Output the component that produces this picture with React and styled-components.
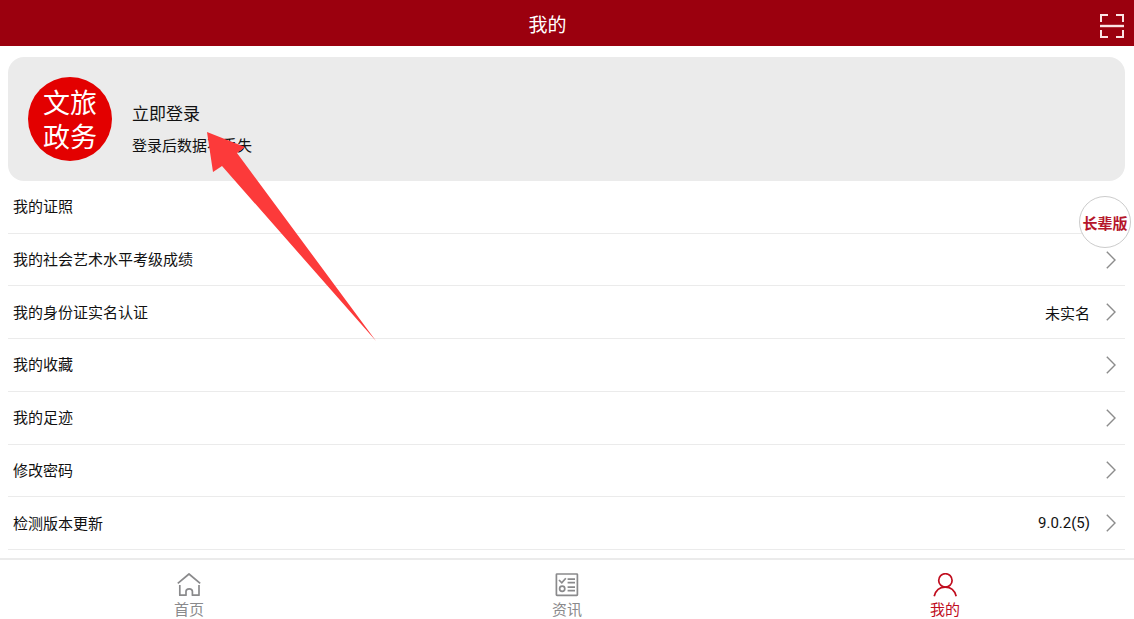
import React from 'react'
import styled, { createGlobalStyle } from 'styled-components';

const rows = [
    { label: '我的证照' },
    { label: '我的社会艺术水平考级成绩' },
    { label: '我的身份证实名认证', value: '未实名' },
    { label: '我的收藏' },
    { label: '我的足迹' },
    { label: '修改密码' },
    { label: '检测版本更新', value: '9.0.2(5)' },
]

function ScanIcon() {
    return (
        <svg width="24" height="24" viewBox="0 0 24 24" fill="none" stroke="currentColor" strokeWidth="2">
            <path d="M1 8V1H8M16 1H23V8M23 16V23H16M8 23H1V16" />
            <path d="M0 12H24" strokeWidth="2.4" />
        </svg>
    )
}

function ChevronIcon() {
    return (
        <svg width="10" height="18" viewBox="0 0 10 18" fill="none" stroke="#8c8c8c" strokeWidth="1.4">
            <path d="M0.8 0.8L9 9L0.8 17.2" />
        </svg>
    )
}

function HomeIcon() {
    return (
        <svg width="24" height="24" viewBox="0 0 24 24" fill="none" stroke="currentColor" strokeWidth="1.7" strokeLinejoin="round">
            <path d="M0.8 10.4L12 1L23.2 10.4" />
            <path d="M2.8 12V22.2H9V18.6C9 16.8 10.2 15.8 12.2 15.8S15.4 16.8 15.4 18.6V22.2H22V12" />
        </svg>
    )
}

function NewsIcon() {
    return (
        <svg width="24" height="24" viewBox="0 0 24 24" fill="none" stroke="currentColor" strokeWidth="1.7">
            <rect x="1.4" y="1" width="21" height="21.4" rx="0.6" />
            <path d="M4 7L6.8 9.8L10.8 5.2" />
            <circle cx="7.2" cy="15.8" r="2.6" />
            <path d="M12.6 6.2H20M12.6 9.6H20M12.6 14.2H20M12.6 17.6H20" />
        </svg>
    )
}

function UserIcon() {
    return (
        <svg width="24" height="24" viewBox="0 0 24 24" fill="none" stroke="currentColor" strokeWidth="1.7">
            <circle cx="12.4" cy="7.4" r="6.7" />
            <path d="M1.2 23.2C2.6 17.8 6.6 14.1 12.2 14.1S21.8 17.8 23.2 23.2" />
        </svg>
    )
}

function App() {
    return (
        <Page>
            <GlobalStyle />
            <Header>
                <Title>我的</Title>
                <ScanButton aria-label="扫一扫"><ScanIcon /></ScanButton>
            </Header>
            <Main>
                <LoginCard>
                    <Logo>
                        <span>文旅</span>
                        <span>政务</span>
                    </Logo>
                    <LoginText>
                        <LoginTitle>立即登录</LoginTitle>
                        <LoginHint>登录后数据不丢失</LoginHint>
                    </LoginText>
                </LoginCard>
                <Menu>
                    {rows.map((row) => (
                        <MenuItem key={row.label}>
                            <MenuButton>
                                <Label>{row.label}</Label>
                                {row.value && <span>{row.value}</span>}
                                <ChevronIcon />
                            </MenuButton>
                        </MenuItem>
                    ))}
                </Menu>
            </Main>
            <TabBar>
                <Tab href="#home"><HomeIcon />首页</Tab>
                <Tab href="#news"><NewsIcon />资讯</Tab>
                <Tab href="#mine" $active aria-current="page"><UserIcon />我的</Tab>
            </TabBar>
            <ElderButton>长辈版</ElderButton>
            <Pointer width="170" height="210" viewBox="0 0 170 210" aria-hidden="true">
                <path d="M0 0L38 15L30 21L169 209L15 34L6 40Z" fill="#fc3a3a" />
            </Pointer>
        </Page>
    )
}

export default App;

const GlobalStyle = createGlobalStyle`
* {
    box-sizing: border-box;
}
body {
    margin: 0;
    background: #fff;
    color: #111;
    font-family: Roboto, "Noto Sans CJK SC", sans-serif;
    font-size: 15px;
}
button {
    padding: 0;
    border: none;
    background: none;
    color: inherit;
    font: inherit;
    cursor: pointer;
}
svg {
    display: block;
    flex-shrink: 0;
}
`
const Page = styled.div`
position: relative;
display: flex;
flex-direction: column;
min-height: 100vh;
`
const Header = styled.header`
display: flex;
align-items: center;
height: 46px;
padding: 5px 10px 0 0;
background: #9b000e;
color: #fff;
`
const Title = styled.h1`
flex: 1;
margin: 0;
font-size: 19px;
line-height: 28px;
font-weight: 400;
text-align: center;
`
const ScanButton = styled.button`
padding-left: 5px;
color: #fbe4e4;
`
const Main = styled.main`
display: flex;
flex: 1;
flex-direction: column;
padding: 11px 9px 8px 8px;
`
const LoginCard = styled.button`
display: flex;
align-items: center;
gap: 20px;
height: 124px;
padding: 0 20px;
border-radius: 16px;
background: #ebebeb;
text-align: left;
`
const Logo = styled.div`
display: flex;
flex-direction: column;
align-items: center;
justify-content: center;
width: 84px;
height: 84px;
padding-top: 4px;
border-radius: 50%;
background: #e30000;
color: #fff;
font-size: 27px;
line-height: 34px;
`
const LoginText = styled.div`
display: flex;
flex-direction: column;
gap: 8px;
padding-top: 22px;
`
const LoginTitle = styled.span`
font-size: 17px;
line-height: 24px;
`
const LoginHint = styled.span`
line-height: 24px;
`
const Menu = styled.ul`
display: grid;
flex: 1;
grid-auto-rows: 1fr;
margin: 0;
padding: 0;
list-style: none;
`
const MenuItem = styled.li`
display: flex;
border-bottom: 1px solid #ebebeb;
`
const MenuButton = styled.button`
display: flex;
flex: 1;
align-items: center;
gap: 16px;
min-height: 48px;
padding: 0 9px 0 5px;
text-align: left;
`
const Label = styled.span`
flex: 1;
padding-bottom: 2px;
`
const TabBar = styled.nav`
display: grid;
grid-template-columns: repeat(3, 1fr);
height: 61px;
border-top: 2px solid #ebebeb;
`
const Tab = styled.a`
display: flex;
flex-direction: column;
align-items: center;
gap: 4px;
padding-top: 13px;
color: ${(props) => (props.$active ? '#c00d1e' : '#8a8a8c')};
line-height: 18px;
text-decoration: none;
`
const ElderButton = styled.button`
position: absolute;
top: 196px;
right: 3px;
width: 52px;
height: 52px;
border: 1px solid #ccc;
border-radius: 50%;
background: #fff;
color: #b5162b;
font-weight: 700;
white-space: nowrap;
`
const Pointer = styled.svg`
position: absolute;
top: 132px;
left: 207px;
pointer-events: none;
`
